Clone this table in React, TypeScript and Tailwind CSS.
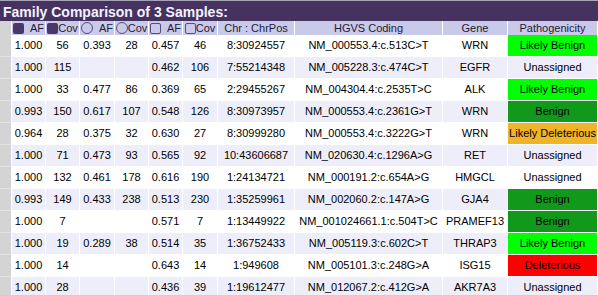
import React from 'react';

type Path = 'Likely Benign' | 'Benign' | 'Likely Deleterious' | 'Deleterious' | 'Unassigned';

interface Row {
  af1: string;
  cov1: string;
  af2: string;
  cov2: string;
  af3: string;
  cov3: string;
  pos: string;
  hgvs: string;
  gene: string;
  path: Path;
}

const rows: Row[] = [
  { af1: '1.000', cov1: '56', af2: '0.393', cov2: '28', af3: '0.457', cov3: '46', pos: '8:30924557', hgvs: 'NM_000553.4:c.513C>T', gene: 'WRN', path: 'Likely Benign' },
  { af1: '1.000', cov1: '115', af2: '', cov2: '', af3: '0.462', cov3: '106', pos: '7:55214348', hgvs: 'NM_005228.3:c.474C>T', gene: 'EGFR', path: 'Unassigned' },
  { af1: '1.000', cov1: '33', af2: '0.477', cov2: '86', af3: '0.369', cov3: '65', pos: '2:29455267', hgvs: 'NM_004304.4:c.2535T>C', gene: 'ALK', path: 'Likely Benign' },
  { af1: '0.993', cov1: '150', af2: '0.617', cov2: '107', af3: '0.548', cov3: '126', pos: '8:30973957', hgvs: 'NM_000553.4:c.2361G>T', gene: 'WRN', path: 'Benign' },
  { af1: '0.964', cov1: '28', af2: '0.375', cov2: '32', af3: '0.630', cov3: '27', pos: '8:30999280', hgvs: 'NM_000553.4:c.3222G>T', gene: 'WRN', path: 'Likely Deleterious' },
  { af1: '1.000', cov1: '71', af2: '0.473', cov2: '93', af3: '0.565', cov3: '92', pos: '10:43606687', hgvs: 'NM_020630.4:c.1296A>G', gene: 'RET', path: 'Unassigned' },
  { af1: '1.000', cov1: '132', af2: '0.461', cov2: '178', af3: '0.616', cov3: '190', pos: '1:24134721', hgvs: 'NM_000191.2:c.654A>G', gene: 'HMGCL', path: 'Unassigned' },
  { af1: '0.993', cov1: '149', af2: '0.433', cov2: '238', af3: '0.513', cov3: '230', pos: '1:35259961', hgvs: 'NM_002060.2:c.147A>G', gene: 'GJA4', path: 'Benign' },
  { af1: '1.000', cov1: '7', af2: '', cov2: '', af3: '0.571', cov3: '7', pos: '1:13449922', hgvs: 'NM_001024661.1:c.504T>C', gene: 'PRAMEF13', path: 'Benign' },
  { af1: '1.000', cov1: '19', af2: '0.289', cov2: '38', af3: '0.514', cov3: '35', pos: '1:36752433', hgvs: 'NM_005119.3:c.602C>T', gene: 'THRAP3', path: 'Likely Benign' },
  { af1: '1.000', cov1: '14', af2: '', cov2: '', af3: '0.643', cov3: '14', pos: '1:949608', hgvs: 'NM_005101.3:c.248G>A', gene: 'ISG15', path: 'Deleterious' },
  { af1: '1.000', cov1: '28', af2: '', cov2: '', af3: '0.436', cov3: '39', pos: '1:19612477', hgvs: 'NM_012067.2:c.412G>A', gene: 'AKR7A3', path: 'Unassigned' },
];

const pathBg: Record<Path, string> = {
  'Likely Benign': 'bg-[#00ff00]',
  'Benign': 'bg-[#10991a]',
  'Likely Deleterious': 'bg-[#f0b429]',
  'Deleterious': 'bg-[#ff0000]',
  'Unassigned': '',
};

const cols = 'grid grid-cols-[12px_34px_34px_35px_34px_34px_35px_77px_148px_65px_90px]';

// sample markers in the header
const Marker = ({ kind }: { kind: 'filled' | 'circle' | 'square' }) => {
  if (kind === 'filled') return <span className="inline-block w-[11px] h-[11px] rounded-[2px] bg-[#4a3868]" />;
  if (kind === 'circle') return <span className="inline-block w-[12px] h-[12px] rounded-full border border-[#5a4d78]" />;
  return <span className="inline-block w-[11px] h-[11px] rounded-[2px] border border-[#5a4d78]" />;
};

const HeadCell = ({ kind, label }: { kind: 'filled' | 'circle' | 'square'; label: string }) => (
  <div className="flex items-center justify-center border-r border-white">
    <Marker kind={kind} />
    <span className="whitespace-pre">{label === 'AF' ? '\u00a0\u00a0AF' : 'Cov'}</span>
  </div>
);

export default function App() {
  return (
    <div className="w-[598px] h-[296px] overflow-hidden bg-white border-b border-[#d0d0d0]" style={{ fontFamily: '"Liberation Sans", Arial, sans-serif' }}>
      {/* Title */}
      <div className="h-[21px] bg-[#45325f] border-t border-[#a8a4b8] pl-[3px] pt-[4px]">
        <span className="block text-[14px] leading-[14px] font-bold text-[#f4f2ff]">Family Comparison of 3 Samples:</span>
      </div>

      {/* Header */}
      <div className={`${cols} h-[14px] text-[11px] leading-[14px] text-[#1c1c38] bg-[#c9c9e9]`}>
        <div className="bg-[#d4d4d4] border-r border-white" />
        <HeadCell kind="filled" label="AF" />
        <HeadCell kind="filled" label="Cov" />
        <HeadCell kind="circle" label="AF" />
        <HeadCell kind="circle" label="Cov" />
        <HeadCell kind="square" label="AF" />
        <HeadCell kind="square" label="Cov" />
        <div className="text-center border-r border-white">Chr : ChrPos</div>
        <div className="text-center border-r border-white">HGVS Coding</div>
        <div className="text-center border-r border-white">Gene</div>
        <div className="text-center border-r border-white">Pathogenicity</div>
      </div>

      {/* Rows */}
      {rows.map((r, i) => {
        const cells = [r.af1, r.cov1, r.af2, r.cov2, r.af3, r.cov3, r.pos, r.hgvs, r.gene];
        return (
          <div key={i} className={`${cols} h-[22px] text-[11px] leading-[21px] text-black ${i % 2 === 1 ? 'bg-[#eeeefa]' : 'bg-white'}`}>
            <div className="bg-[#d4d4d4] border-r border-white border-b border-b-[#e4e4e4]" />
            {cells.map((c, j) => (
              <div key={j} className="text-center whitespace-nowrap border-r border-b border-white">{c}</div>
            ))}
            <div className={`text-center whitespace-nowrap border-r border-b border-white ${pathBg[r.path]}`}>{r.path}</div>
          </div>
        );
      })}
    </div>
  );
}
